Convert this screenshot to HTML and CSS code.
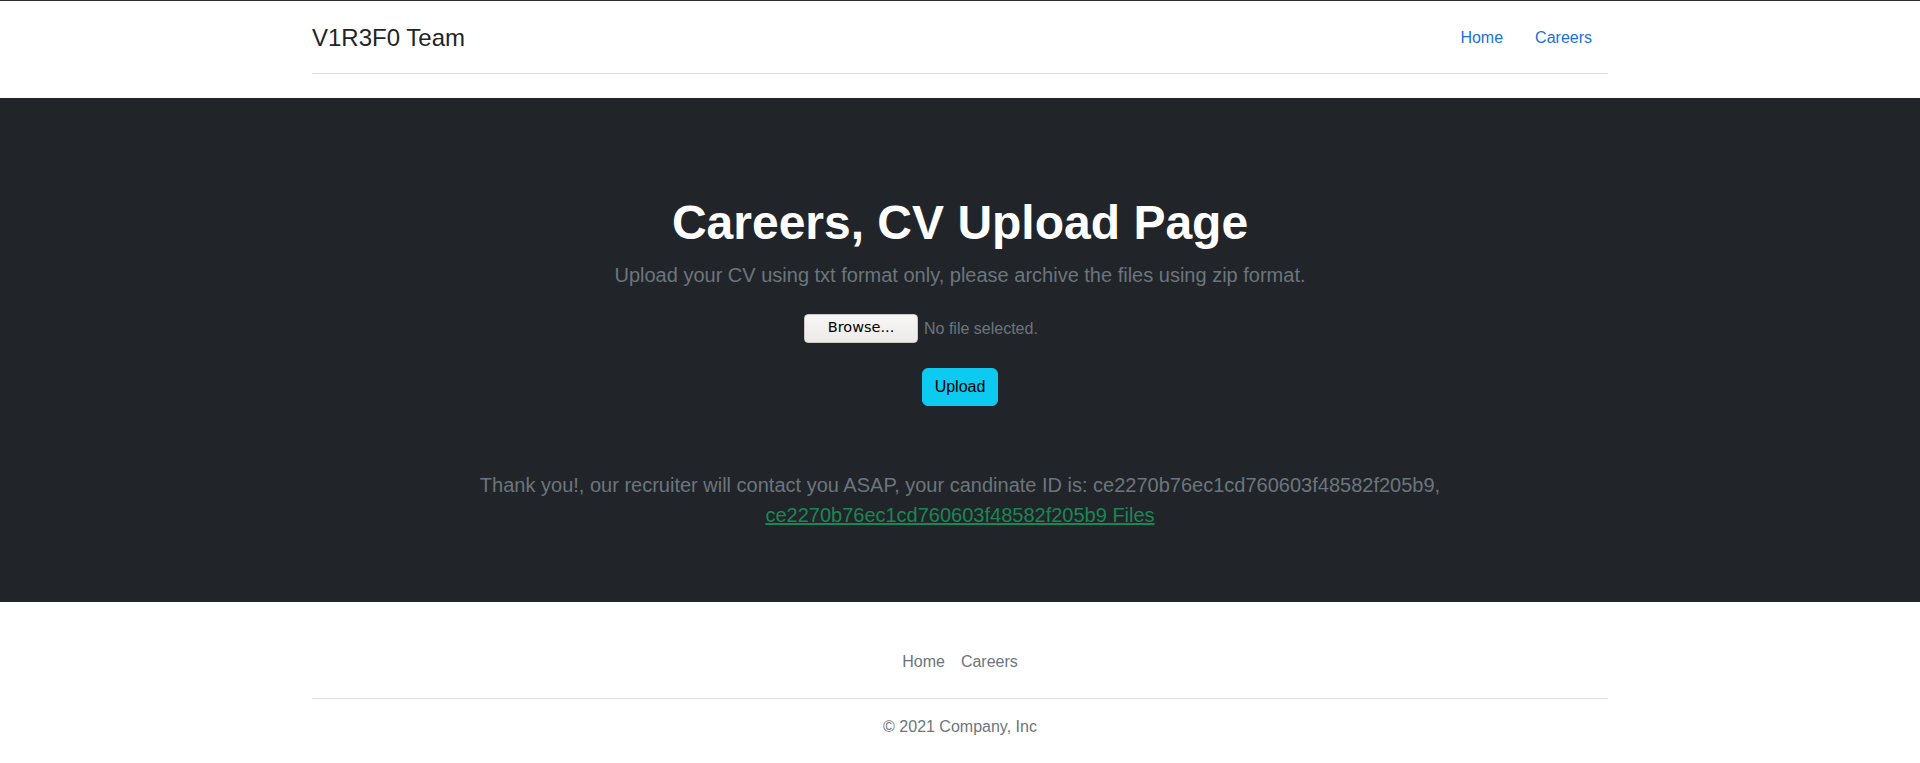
FILE: index.html
```
<!DOCTYPE html>
<html lang="en">
<head>
<meta charset="utf-8">
<title>V1R3F0 Team - Careers</title>
<link rel="stylesheet" href="styles.css">
</head>
<body>
  <div class="container">
    <header class="site-header">
      <a href="#" class="brand">V1R3F0 Team</a>
      <ul class="nav">
        <li><a href="#" class="nav-link">Home</a></li>
        <li><a href="#" class="nav-link">Careers</a></li>
      </ul>
    </header>
  </div>

  <section class="hero">
    <h1 class="hero-title">Careers, CV Upload Page</h1>
    <p class="lead">Upload your CV using txt format only, please archive the files using zip format.</p>
    <form class="upload-form">
      <div class="file-input">
        <span class="browse-btn">Browse...</span>
        <span class="file-label">No file selected.</span>
      </div>
      <button type="button" class="btn-upload">Upload</button>
    </form>
    <p class="thanks">Thank you!, our recruiter will contact you ASAP, your candinate ID is: ce2270b76ec1cd760603f48582f205b9,<br><a href="#" class="files-link">ce2270b76ec1cd760603f48582f205b9 Files</a></p>
  </section>

  <div class="container">
    <footer class="site-footer">
      <ul class="footer-nav">
        <li><a href="#" class="footer-link">Home</a></li>
        <li><a href="#" class="footer-link">Careers</a></li>
      </ul>
      <p class="copyright">© 2021 Company, Inc</p>
    </footer>
  </div>
</body>
</html>
```
FILE: styles.css
```
* {
  box-sizing: border-box;
}

body {
  margin: 0;
  border-top: 1px solid #2b2b2b;
  font-family: "Liberation Sans", Arial, sans-serif;
  font-size: 16px;
  line-height: 1.5;
  color: #212529;
  background: #fff;
}

a {
  text-decoration: none;
}

.container {
  width: 1320px;
  margin: 0 auto;
  padding: 0 12px;
}

.site-header {
  display: flex;
  align-items: center;
  justify-content: space-between;
  padding: 17px 0 15px;
  margin-bottom: 24px;
  border-bottom: 1px solid #dee2e6;
}

.brand {
  font-size: 24px;
  line-height: 36px;
  color: #212529;
}

.nav {
  display: flex;
  list-style: none;
  margin: 0;
  padding: 0;
}

.nav-link {
  display: block;
  padding: 8px 16px;
  line-height: 24px;
  color: #1a6fe0;
}

.hero {
  background: #212529;
  color: #6c757d;
  text-align: center;
  padding: 96px 24px 72px;
}

.hero-title {
  margin: 0 0 8px;
  font-size: 48px;
  line-height: 1.2;
  font-weight: 700;
  color: #fff;
}

.lead {
  margin: 0 0 24px;
  font-size: 20px;
  line-height: 30px;
}

.upload-form {
  display: flex;
  flex-direction: column;
  align-items: center;
}

.file-input {
  width: 312px;
  height: 29px;
  display: flex;
  align-items: center;
  gap: 6px;
}

.browse-btn {
  width: 114px;
  height: 29px;
  display: flex;
  align-items: center;
  justify-content: center;
  background: linear-gradient(#f7f6f5, #edebe9);
  border: 1px solid #cdc7c2;
  border-radius: 4px;
  font-family: "DejaVu Sans", sans-serif;
  font-size: 14.5px;
  color: #000;
}

.file-label {
  padding-top: 2px;
  font-size: 16px;
  color: #6c757d;
}

.btn-upload {
  margin-top: 25px;
  padding: 6px 12px;
  font-family: "Liberation Sans", Arial, sans-serif;
  font-size: 16px;
  line-height: 24px;
  color: #000;
  background: #0dcaf0;
  border: 1px solid #0dcaf0;
  border-radius: 6px;
}

.thanks {
  margin: 64px 0 0;
  font-size: 20px;
  line-height: 30px;
}

.files-link {
  color: #198754;
  text-decoration: underline;
}

.site-footer {
  margin-top: 24px;
  padding: 16px 0;
}

.footer-nav {
  display: flex;
  justify-content: center;
  list-style: none;
  margin: 0 0 16px;
  padding: 0 0 16px;
  border-bottom: 1px solid #dee2e6;
}

.footer-link {
  display: block;
  padding: 8px;
  line-height: 24px;
  color: #6c757d;
}

.copyright {
  margin: 0;
  text-align: center;
  color: #6c757d;
}
```
